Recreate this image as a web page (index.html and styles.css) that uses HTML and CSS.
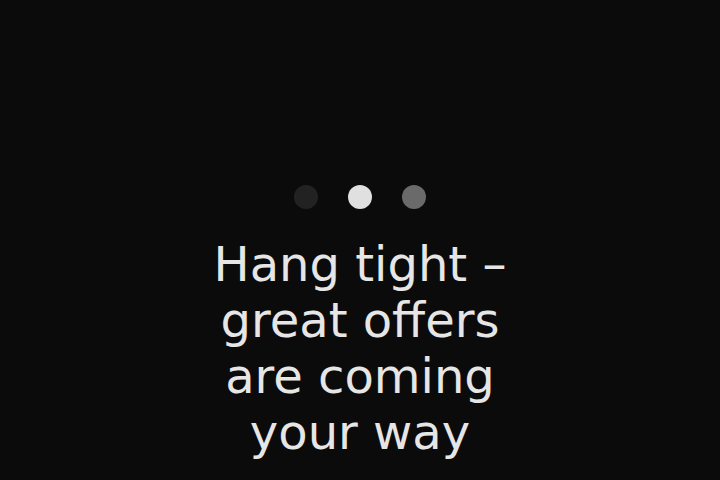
FILE: index.html
```html
<!DOCTYPE html>
<html>
<head>
<meta charset="utf-8">
<link rel="stylesheet" href="styles.css">
</head>
<body>
<main class="loader">
  <div class="dots">
    <span class="dot dot-dim"></span>
    <span class="dot dot-bright"></span>
    <span class="dot dot-mid"></span>
  </div>
  <p class="message">Hang tight – great offers are coming your way</p>
</main>
</body>
</html>
```
FILE: styles.css
```css
html, body {
  margin: 0;
  padding: 0;
  background: #0b0b0b;
  height: 100%;
  overflow: hidden;
}
.loader {
  display: flex;
  flex-direction: column;
  align-items: center;
  padding-top: 185px;
  font-family: "DejaVu Sans", sans-serif;
}
.dots {
  display: flex;
  gap: 30px;
}
.dot {
  width: 24px;
  height: 24px;
  border-radius: 50%;
}
.dot-dim { background: #222222; }
.dot-bright { background: #e0e0e0; }
.dot-mid { background: #6a6a6a; }
.message {
  margin: 27px 0 0;
  width: 320px;
  text-align: center;
  color: #e6e6e6;
  font-size: 48px;
  line-height: 56px;
}
```
